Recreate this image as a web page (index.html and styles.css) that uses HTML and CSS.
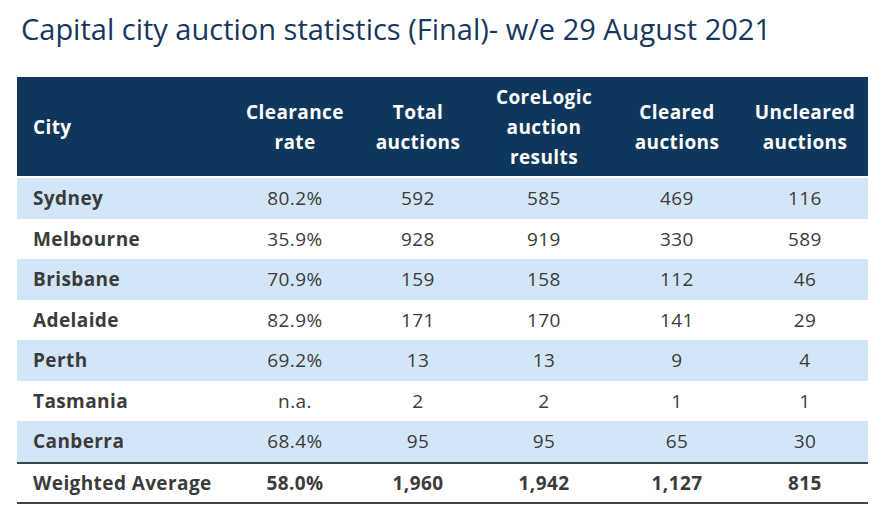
FILE: index.html
```html
<!DOCTYPE html>
<html lang="en">
<head>
<meta charset="utf-8">
<title>Capital city auction statistics</title>
<link rel="stylesheet" href="styles.css">
</head>
<body>
<div class="page">
  <h1 class="title">Capital city auction statistics (Final)- w/e 29 August 2021</h1>
  <table class="stats">
    <colgroup>
      <col class="c-city"><col class="c-rate"><col class="c-total"><col class="c-core"><col class="c-clr"><col class="c-unclr">
    </colgroup>
    <thead>
      <tr>
        <th class="city">City</th>
        <th>Clearance<br>rate</th>
        <th>Total<br>auctions</th>
        <th>CoreLogic<br>auction<br>results</th>
        <th>Cleared<br>auctions</th>
        <th>Uncleared<br>auctions</th>
      </tr>
    </thead>
    <tbody>
      <tr class="shade"><td class="city">Sydney</td><td>80.2%</td><td>592</td><td>585</td><td>469</td><td>116</td></tr>
      <tr><td class="city">Melbourne</td><td>35.9%</td><td>928</td><td>919</td><td>330</td><td>589</td></tr>
      <tr class="shade"><td class="city">Brisbane</td><td>70.9%</td><td>159</td><td>158</td><td>112</td><td>46</td></tr>
      <tr><td class="city">Adelaide</td><td>82.9%</td><td>171</td><td>170</td><td>141</td><td>29</td></tr>
      <tr class="shade"><td class="city">Perth</td><td>69.2%</td><td>13</td><td>13</td><td>9</td><td>4</td></tr>
      <tr><td class="city">Tasmania</td><td>n.a.</td><td>2</td><td>2</td><td>1</td><td>1</td></tr>
      <tr class="shade"><td class="city">Canberra</td><td>68.4%</td><td>95</td><td>95</td><td>65</td><td>30</td></tr>
      <tr class="total"><td class="city">Weighted Average</td><td>58.0%</td><td>1,960</td><td>1,942</td><td>1,127</td><td>815</td></tr>
    </tbody>
  </table>
</div>
</body>
</html>
```
FILE: styles.css
```css
html, body {
  margin: 0;
  padding: 0;
  background: #ffffff;
}
.page {
  padding: 11px 4px 0 17px;
  font-family: "Open Sans", "Liberation Sans", sans-serif;
}
.title {
  margin: 0 0 31px 4px;
  font-size: 29px;
  font-weight: 400;
  line-height: 35px;
  color: #17375e;
  white-space: nowrap;
}
.stats {
  width: 851px;
  table-layout: fixed;
  border-collapse: collapse;
  font-size: 19px;
  letter-spacing: 0.4px;
  color: #3b3b3b;
}
.c-city { width: 213px; }
.c-rate { width: 130px; }
.c-total { width: 116px; }
.c-core { width: 136px; }
.c-clr { width: 130px; }
.c-unclr { width: 126px; }
.stats thead th {
  background: #0f375c;
  color: #ffffff;
  font-weight: 700;
  line-height: 30px;
  height: 99px;
  padding: 0;
  text-align: center;
  border-bottom: 2px solid #ffffff;
}
.stats thead th.city {
  text-align: left;
  padding-left: 16px;
}
.stats td {
  height: 40.5px;
  padding: 0;
  text-align: center;
}
.stats td.city {
  text-align: left;
  padding-left: 16px;
  font-weight: 700;
}
.stats tr.shade td {
  background: #d3e6f7;
}
.stats tr.total td {
  font-weight: 700;
  border-top: 2px solid #3b4550;
  border-bottom: 2px solid #3b4550;
  height: 38px;
}
```
